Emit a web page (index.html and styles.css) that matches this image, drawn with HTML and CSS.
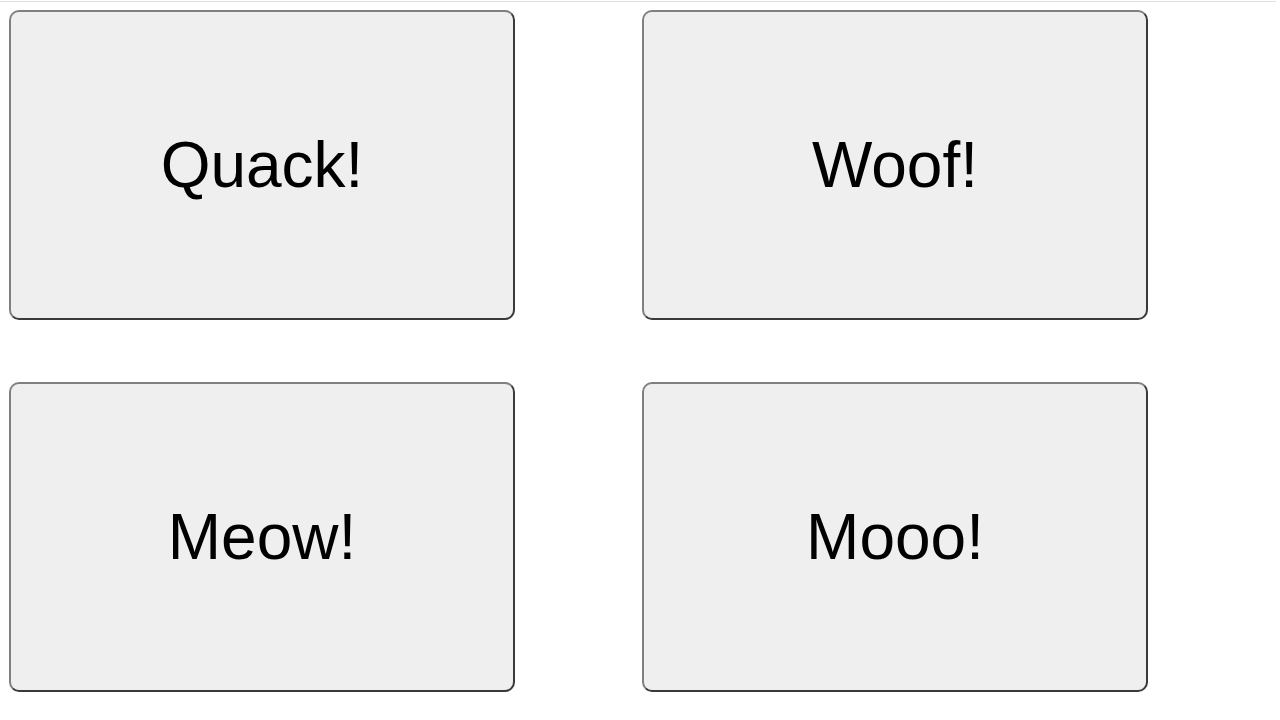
FILE: index.html
```html
<!DOCTYPE html>
<html>
<head>
<meta charset="utf-8">
<link rel="stylesheet" href="styles.css">
</head>
<body>
<div class="topline"></div>
<div class="grid">
  <div class="card">Quack!</div>
  <div class="card">Woof!</div>
  <div class="card">Meow!</div>
  <div class="card">Mooo!</div>
</div>
</body>
</html>
```
FILE: styles.css
```css
html, body {
  margin: 0;
  padding: 0;
  background: #ffffff;
}
body {
  font-family: "Liberation Sans", Arial, sans-serif;
}
.topline {
  margin-top: 1px;
  height: 1px;
  width: 1276px;
  background: #e2e2e2;
}
.grid {
  display: grid;
  grid-template-columns: 506px 506px;
  column-gap: 127px;
  row-gap: 62px;
  padding: 8px 0 0 9px;
}
.card {
  box-sizing: border-box;
  height: 310px;
  border: 2px solid;
  border-color: #808080 #3a3a3a #3a3a3a #808080;
  border-radius: 10px;
  background: #efefef;
  display: flex;
  align-items: center;
  justify-content: center;
  font-size: 64px;
  color: #000;
}
```
